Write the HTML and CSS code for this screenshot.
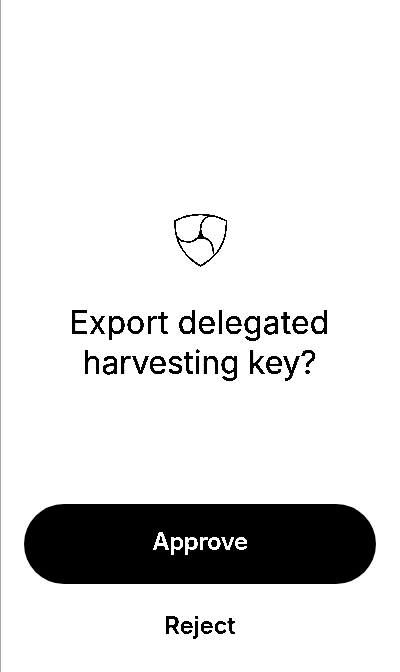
FILE: index.html
```html
<!DOCTYPE html>
<html lang="en">
<head>
<meta charset="utf-8">
<title>Export delegated harvesting key?</title>
<link rel="stylesheet" href="styles.css">
</head>
<body>
<main class="screen">
  <section class="prompt">
    <svg class="logo" viewBox="24 24 168 168" aria-hidden="true">
      <path class="line" d="M29.500 47.500Q67 28.500 106.500 28.500Q147 28.500 184.500 47.500C185 112 160 152 106.500 183.500C54 152 28 105 29.500 47.500Z"/>
      <path class="line" d="M140 31C117 37 107 49 107 70V91M36 94C44 108 61 112 77 110Q91 107 98 99M113 98C132 100 145 117 145.500 148"/>
      <path class="core" d="M104 76H110C110 88 115 96 125 103Q106 99 89 103C100 96 104 89 104 76Z"/>
    </svg>
    <h1 class="title"><span class="first">Export delegated</span><br><span class="second">harvesting key?</span></h1>
  </section>
  <div class="actions">
    <button class="approve">Approve</button>
    <button class="reject">Reject</button>
  </div>
</main>
</body>
</html>
```
FILE: styles.css
```css
* { box-sizing: border-box; }
body { margin: 0; background: #fff; color: #000; font-family: Inter, sans-serif; }
.screen { height: 672px; border-left: 1px solid #a6a6a6; display: flex; flex-direction: column; }
.prompt { height: 504px; padding-top: 213px; display: flex; flex-direction: column; align-items: center; }
.logo { width: 56px; height: 56px; background: #fff; filter: brightness(.85) contrast(20); }
.line { fill: none; stroke: #000; stroke-width: 4.300; }
.core { fill: #000; }
/* One-bit display: text edges are hard black and white. */
.title { margin: 34px 0 0; padding-right: 2px; font-size: 32px; line-height: 40px; font-weight: 400; text-align: center; white-space: nowrap; background: #fff; filter: brightness(.72) contrast(20); }
.first { letter-spacing: .12px; }
.second { letter-spacing: -.25px; }
.actions { padding: 0 24px 0 23px; display: flex; flex-direction: column; }
button { border: 0; padding: 0 0 4px; font: 600 24px/32px Inter, sans-serif; letter-spacing: -.4px; filter: contrast(20); }
.approve { height: 80px; border-radius: 40px; background: #000; color: #fff; }
.reject { height: 88px; background: #fff; color: #000; letter-spacing: -.2px; }
```
